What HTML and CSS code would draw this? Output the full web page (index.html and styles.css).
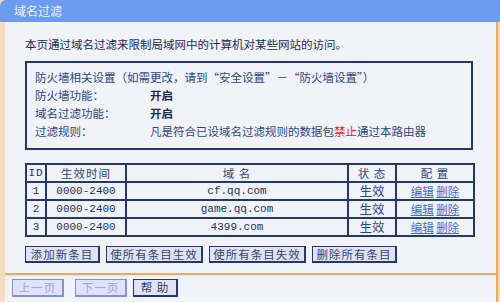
FILE: index.html
```html
<!DOCTYPE html>
<html lang="zh-CN">
<head>
    <meta charset="UTF-8">
    <title>域名过滤</title>
    <link rel="stylesheet" href="styles.css">
</head>
<body>
    <div class="page">
        <div class="title-bar">域名过滤</div>
        <div class="main">
            <p class="intro">本页通过域名过滤来限制局域网中的计算机对某些网站的访问。</p>
            <div class="fw-box">
                <div class="fw-row">防火墙相关设置（如需更改，请到“安全设置”－“防火墙设置”）</div>
                <div class="fw-row"><span class="fw-label">防火墙功能：</span><b>开启</b></div>
                <div class="fw-row"><span class="fw-label">域名过滤功能：</span><b>开启</b></div>
                <div class="fw-row"><span class="fw-label">过滤规则：</span>凡是符合已设域名过滤规则的数据包<span class="deny">禁止</span>通过本路由器</div>
            </div>
            <table class="rules">
                <colgroup><col class="c-id"><col class="c-time"><col class="c-domain"><col class="c-state"><col class="c-conf"></colgroup>
                <tr><th class="mono">ID</th><th>生效时间</th><th>域 名</th><th>状 态</th><th>配 置</th></tr>
                <tr><td class="mono">1</td><td class="mono">0000-2400</td><td class="mono">cf.qq.com</td><td class="state">生效</td><td><a href="#">编辑</a> <a href="#">删除</a></td></tr>
                <tr><td class="mono">2</td><td class="mono">0000-2400</td><td class="mono">game.qq.com</td><td class="state">生效</td><td><a href="#">编辑</a> <a href="#">删除</a></td></tr>
                <tr><td class="mono">3</td><td class="mono">0000-2400</td><td class="mono">4399.com</td><td class="state">生效</td><td><a href="#">编辑</a> <a href="#">删除</a></td></tr>
            </table>
            <div class="actions">
                <button class="btn w75">添加新条目</button>
                <button class="btn w97">使所有条目生效</button>
                <button class="btn w97">使所有条目失效</button>
                <button class="btn w85">删除所有条目</button>
            </div>
        </div>
        <div class="footer">
            <button class="btn w52 disabled">上一页</button>
            <button class="btn w52 disabled gap">下一页</button>
            <button class="btn w45">帮 助</button>
        </div>
    </div>
</body>
</html>
```

FILE: styles.css
```css
html, body { margin: 0; padding: 0; }
body { font-family: "Noto Sans CJK SC", "Noto Sans", sans-serif; font-size: 11.5px; color: #22315e; background: #f8dcc0; }
.page { width: 500px; height: 302px; overflow: hidden; background: #f8dcc0; }
.title-bar { height: 22px; line-height: 22px; padding-left: 14px; background: #6b9cf2; color: #eef3ff; font-size: 12px; border-top-left-radius: 6px; }
.main { margin: 0 2px 0 5px; padding: 14px 0 10px 20px; background: #f2f3f8; border-right: 2px solid #f2a85a; }
.intro { margin: 0 0 9px; line-height: 16px; color: #1c2a55; }
.fw-box { width: 448px; box-sizing: border-box; border: 2px solid #1e3a6e; padding: 5px 0 8px 8px; color: #2c4685; }
.fw-row { height: 18px; line-height: 18px; }
.fw-label { display: inline-block; width: 115px; }
.fw-row b { color: #1c2a55; }
.deny { color: #e02020; }
.rules { margin-top: 13px; width: 448px; border-collapse: collapse; table-layout: fixed; }
.c-id { width: 20px; } .c-time { width: 80px; } .c-domain { width: 222px; } .c-state { width: 48px; } .c-conf { width: 78px; }
.rules th, .rules td { border: 2px solid #1e3a6e; padding: 0; text-align: center; height: 16px; line-height: 16px; font-weight: normal; color: #2c4685; }
.rules th { letter-spacing: 1px; }
.rules .mono { font-family: "Liberation Mono", "DejaVu Sans Mono", monospace; font-size: 11px; color: #22315e; }
.rules .state { font-size: 12.5px; }
.rules a { color: #3b6fd0; }
.actions { display: flex; gap: 6px; margin-top: 9px; }
.btn { height: 17px; padding: 0; font-family: inherit; font-size: 11.5px; line-height: 13px; color: #3a4466; background: #dfe2fa; border: 1px solid #1e3a6e; border-right-width: 2px; border-bottom-width: 2px; letter-spacing: 1px; }
.w75 { width: 75px; } .w97 { width: 97px; } .w85 { width: 85px; } .w52 { width: 52px; } .w45 { width: 45px; }
.footer { margin: 0 2px 0 5px; height: 23px; padding: 4px 0 0 7px; background: #f2f3f8; border-top: 2px solid #f2a85a; border-bottom: 2px solid #f2a85a; border-right: 2px solid #f2a85a; display: flex; }
.footer .btn { height: 18px; margin-right: 6px; }
.footer .gap { margin-left: 5px; }
.btn.disabled { color: #9ea6cc; border-color: #8294c4; }
```
